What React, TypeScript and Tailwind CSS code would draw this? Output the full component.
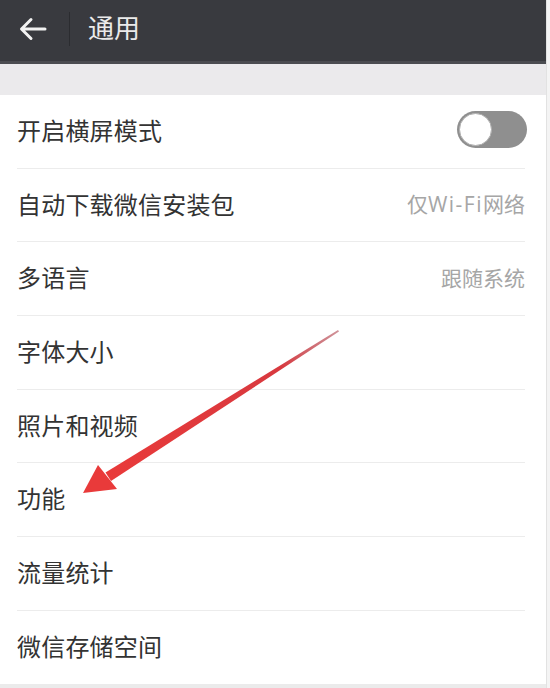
import React from "react";

const rows: { label: string; value?: React.ReactNode; toggle?: boolean }[] = [
  { label: "开启横屏模式", toggle: true },
  {
    label: "自动下载微信安装包",
    value: (
      <>
        仅<span className="tracking-[1.5px]" style={{ fontFamily: '"Open Sans", "Noto Sans", sans-serif' }}>Wi-Fi</span>网络
      </>
    ),
  },
  { label: "多语言", value: "跟随系统" },
  { label: "字体大小" },
  { label: "照片和视频" },
  { label: "功能" },
  { label: "流量统计" },
  { label: "微信存储空间" },
];

export default function App() {
  const font = { fontFamily: '"Noto Sans CJK SC", "Noto Sans", sans-serif' };
  return (
    <div className="relative w-[550px] h-[688px] overflow-hidden bg-white flex" style={font}>
      <div className="w-[546px] flex flex-col">
        <div className="h-[64px] bg-[#393a3f] border-b-[3px] border-[#4b4c51] flex items-center shrink-0">
          <div className="w-[69px] flex items-center justify-center pr-[4px] pb-[4px]">
            <svg width="28" height="24" viewBox="0 0 28 24" fill="none">
              <path d="M26 12H3M12 2.5L2.5 12L12 21.5" stroke="#f2f2f2" strokeWidth="3" strokeLinecap="round" strokeLinejoin="round" />
            </svg>
          </div>
          <div className="w-px h-[34px] bg-[#2b2c30] mb-[4px]" />
          <div className="ml-[18px] text-[26px] leading-none text-[#eaeaea] pb-[8px]">通用</div>
        </div>
        <div className="h-[31px] bg-[#ebeaec] shrink-0" />
        <div className="flex-1 flex flex-col bg-white">
          {rows.map((r, i) => (
            <div key={r.label} className="pl-[17px] pr-[21px] shrink-0">
              <div
                className={
                  "h-[73px] flex items-center justify-between pb-[3px]" +
                  (i < rows.length - 1 ? " border-b border-[#ececec]" : "")
                }
                style={i < rows.length - 1 ? { height: 73.7 } : undefined}
              >
                <span className="text-[24px] leading-none text-[#333333] tracking-[0.2px]">{r.label}</span>
                {r.value && (
                  <span className="text-[21px] leading-none text-[#a6a6a6]">{r.value}</span>
                )}
                {r.toggle && (
                  <div className="w-[70px] h-[37px] rounded-full bg-[#8f8f8f] flex items-center pl-[2px] -mr-[2px]">
                    <div className="w-[33px] h-[33px] rounded-full bg-white border-[1.5px] border-[#b0b0b0]" />
                  </div>
                )}
              </div>
            </div>
          ))}
        </div>
        <div className="h-[4px] bg-[#ebebeb] shrink-0" />
      </div>
      <div className="w-[4px] bg-[#f4f4f4] border-l border-[#e2e2e2]" />
      <svg className="absolute left-0 top-0 pointer-events-none" width="550" height="688" viewBox="0 0 550 688">
        <defs>
          <linearGradient id="shaft" x1="338" y1="330" x2="108" y2="477" gradientUnits="userSpaceOnUse">
            <stop offset="0" stopColor="#b04a55" stopOpacity="0.6" />
            <stop offset="0.25" stopColor="#d8393f" />
            <stop offset="1" stopColor="#e93a3a" />
          </linearGradient>
        </defs>
        <polygon points="338,330 339,331.5 111,481 105.5,472.5" fill="url(#shaft)" />
        <polygon points="83,493 98,465 117,489" fill="#e93a3a" />
      </svg>
    </div>
  );
}
